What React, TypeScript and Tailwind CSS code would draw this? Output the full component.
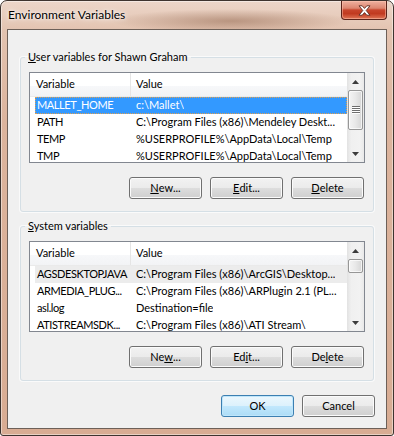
import React from "react";

type Row = { name: string; value: string };

const userRows: Row[] = [
  { name: "MALLET_HOME", value: "c:\\Mallet\\" },
  { name: "PATH", value: "C:\\Program Files (x86)\\Mendeley Deskt..." },
  { name: "TEMP", value: "%USERPROFILE%\\AppData\\Local\\Temp" },
  { name: "TMP", value: "%USERPROFILE%\\AppData\\Local\\Temp" },
];

const sysRows: Row[] = [
  { name: "AGSDESKTOPJAVA", value: "C:\\Program Files (x86)\\ArcGIS\\Desktop..." },
  { name: "ARMEDIA_PLUG...", value: "C:\\Program Files (x86)\\ARPlugin 2.1 (PL..." },
  { name: "asl.log", value: "Destination=file" },
  { name: "ATISTREAMSDK...", value: "C:\\Program Files (x86)\\ATI Stream\\" },
];

function Arrow({ down }: { down?: boolean }) {
  return (
    <div className="h-[17px] shrink-0 flex items-center justify-center">
      <svg width="7" height="4" viewBox="0 0 7 4">
        {down ? (
          <path d="M0 0 L7 0 L3.5 4 Z" fill="#3c3c3c" />
        ) : (
          <path d="M3.5 0 L7 4 L0 4 Z" fill="#3c3c3c" />
        )}
      </svg>
    </div>
  );
}

function ScrollBar({ big }: { big: boolean }) {
  return (
    <div className="w-[17px] shrink-0 h-full flex flex-col bg-[linear-gradient(to_right,#e2e2e2,#f0f0f0_25%,#f2f2f2_75%,#e9e9e9)]">
      <Arrow />
      <div className="flex-1 flex flex-col">
        {big ? (
          <div className="h-[40px] ml-[1px] mr-[1px] rounded-[2px] border border-[#979797] bg-[linear-gradient(to_right,#f4f4f4,#e8e8e8_50%,#d6d6d6)] shadow-[inset_0_0_0_1px_rgba(255,255,255,0.7)] flex items-center justify-center">
            <svg width="8" height="8" viewBox="0 0 8 8">
              <rect x="0" y="0" width="8" height="1" fill="#6e6e6e" />
              <rect x="0" y="1" width="8" height="1" fill="#ffffff" />
              <rect x="0" y="2" width="8" height="1" fill="#6e6e6e" />
              <rect x="0" y="3" width="8" height="1" fill="#ffffff" />
              <rect x="0" y="4" width="8" height="1" fill="#6e6e6e" />
              <rect x="0" y="5" width="8" height="1" fill="#ffffff" />
              <rect x="0" y="6" width="8" height="1" fill="#6e6e6e" />
              <rect x="0" y="7" width="8" height="1" fill="#ffffff" />
            </svg>
          </div>
        ) : (
          <div className="h-[14px] ml-[1px] mr-[1px] rounded-[2px] border border-[#979797] bg-[linear-gradient(to_right,#f4f4f4,#e8e8e8_50%,#d6d6d6)] shadow-[inset_0_0_0_1px_rgba(255,255,255,0.7)]" />
        )}
      </div>
      <Arrow down />
    </div>
  );
}

function ListView({ rows, focused }: { rows: Row[]; focused: boolean }) {
  return (
    <div className="h-[91px] border border-[#828790] bg-white flex overflow-hidden">
      <div className="flex-1 min-w-0 flex flex-col">
        <div className="h-[24px] shrink-0 flex border-b border-[#eaeaea] bg-[linear-gradient(to_bottom,#ffffff_0%,#ffffff_55%,#f7f8fa_55%,#f2f3f5_100%)]">
          <div className="w-[101px] shrink-0 border-r border-[#e5e5e5] pl-[6px] flex items-center">Variable</div>
          <div className="flex-1 pl-[5px] flex items-center">Value</div>
        </div>
        {rows.map((r, i) => {
          const sel = i === 0;
          return (
            <div key={r.name} className="h-[17px] shrink-0 flex">
              <div
                className={
                  sel
                    ? focused
                      ? "ml-[5px] flex-1 h-full flex items-center bg-[#3399ff] text-white outline-1 outline-dotted outline-[#e0a050] -outline-offset-1"
                      : "ml-[5px] flex-1 h-full flex items-center bg-[#ececec]"
                    : "ml-[5px] flex-1 h-full flex items-center"
                }
              >
                <div className="w-[95px] pl-[2px] shrink-0 overflow-hidden whitespace-nowrap tracking-[-0.4px]">{r.name}</div>
                <div className="pl-[6px] whitespace-nowrap overflow-hidden">{r.value}</div>
              </div>
            </div>
          );
        })}
      </div>
      <ScrollBar big={focused} />
    </div>
  );
}

function Btn({ children, primary }: { children: React.ReactNode; primary?: boolean }) {
  return (
    <button
      className={
        primary
          ? "w-[73px] h-[22px] rounded-[3px] border border-[#3c7fb1] bg-[linear-gradient(to_bottom,#ecf7fd_0%,#dcf1fc_50%,#c2e8fd_50%,#acdcf6_100%)] shadow-[inset_0_0_0_1px_#bfe6fb] flex items-center justify-center text-black"
          : "w-[73px] h-[22px] rounded-[3px] border border-[#707070] bg-[linear-gradient(to_bottom,#f2f2f2_0%,#ebebeb_50%,#dddddd_50%,#cfcfcf_100%)] shadow-[inset_0_0_0_1px_#fbfbfb] flex items-center justify-center text-black"
      }
    >
      {children}
    </button>
  );
}

function Group({ title, children }: { title: React.ReactNode; children: React.ReactNode }) {
  return (
    <fieldset className="mx-[12px] border border-[#d5dfe5] rounded-[3px] px-0 pt-0 pb-[12px] shadow-[0_0_0_1px_#fafafa]">
      <legend className="ml-[4px] px-[3px] leading-[14px] h-[14px]">{title}</legend>
      <div className="px-[8px] pt-[8px]">{children}</div>
    </fieldset>
  );
}

export default function App() {
  return (
    <div className="w-[394px] h-[436px] font-['Lato',sans-serif] text-[11px] text-black">
      <div className="w-[394px] h-[436px] flex flex-col border border-[#3e342f] rounded-t-[7px] rounded-b-[3px] bg-[linear-gradient(to_bottom,#ecd6c9,#e3c3b0_30px,#dcb49d_120px,#d8ac93)] shadow-[inset_0_0_0_1px_rgba(255,255,255,0.45)] overflow-hidden">
        {/* title bar */}
        <div className="h-[28px] shrink-0 flex justify-between bg-[radial-gradient(ellipse_120px_12px_at_230px_20px,rgba(130,85,60,0.45),transparent)]">
          <div className="pl-[7px] flex items-center text-[12px] [text-shadow:0_0_6px_rgba(255,255,255,0.95),0_0_3px_rgba(255,255,255,0.9)]">
            Environment Variables
          </div>
          <div className="mr-[6px] w-[46px] h-[19px] rounded-b-[4px] border border-t-0 border-[#5a231a] bg-[linear-gradient(to_bottom,#eeb1a0_0%,#dc8670_40%,#c8452c_50%,#c13a20_70%,#e07556_100%)] shadow-[inset_0_0_0_1px_rgba(255,200,180,0.5)] flex items-center justify-center">
            <svg width="13" height="11" viewBox="0 0 13 11">
              <path
                d="M1 0.8 L4.2 0.8 L6.5 3.4 L8.8 0.8 L12 0.8 L8.2 5.5 L12 10.2 L8.8 10.2 L6.5 7.6 L4.2 10.2 L1 10.2 L4.8 5.5 Z"
                fill="#ffffff"
                stroke="#5b2a1f"
                strokeWidth="0.9"
                strokeLinejoin="round"
              />
            </svg>
          </div>
        </div>
        {/* client */}
        <div className="mx-[6px] h-[400px] shrink-0 border border-[#6d6058] bg-[#f0f0f0] flex flex-col pt-[20px]">
          <Group
            title={
              <>
                <span className="underline">U</span>ser variables for Shawn Graham
              </>
            }
          >
            <ListView rows={userRows} focused />
            <div className="mt-[14px] flex justify-end gap-[8px] pr-[1px]">
              <Btn>
                <span className="underline">N</span>ew...
              </Btn>
              <Btn>
                <span className="underline">E</span>dit...
              </Btn>
              <Btn>
                <span className="underline">D</span>elete
              </Btn>
            </div>
          </Group>
          <div className="h-[7px] shrink-0" />
          <Group
            title={
              <>
                <span className="underline">S</span>ystem variables
              </>
            }
          >
            <ListView rows={sysRows} focused={false} />
            <div className="mt-[14px] flex justify-end gap-[8px] pr-[1px]">
              <Btn>
                Ne<span className="underline">w</span>...
              </Btn>
              <Btn>
                Ed<span className="underline">i</span>t...
              </Btn>
              <Btn>
                De<span className="underline">l</span>ete
              </Btn>
            </div>
          </Group>
          <div className="mt-[14px] flex justify-end gap-[8px] pr-[11px]">
            <Btn primary>OK</Btn>
            <Btn>Cancel</Btn>
          </div>
        </div>
      </div>
    </div>
  );
}
